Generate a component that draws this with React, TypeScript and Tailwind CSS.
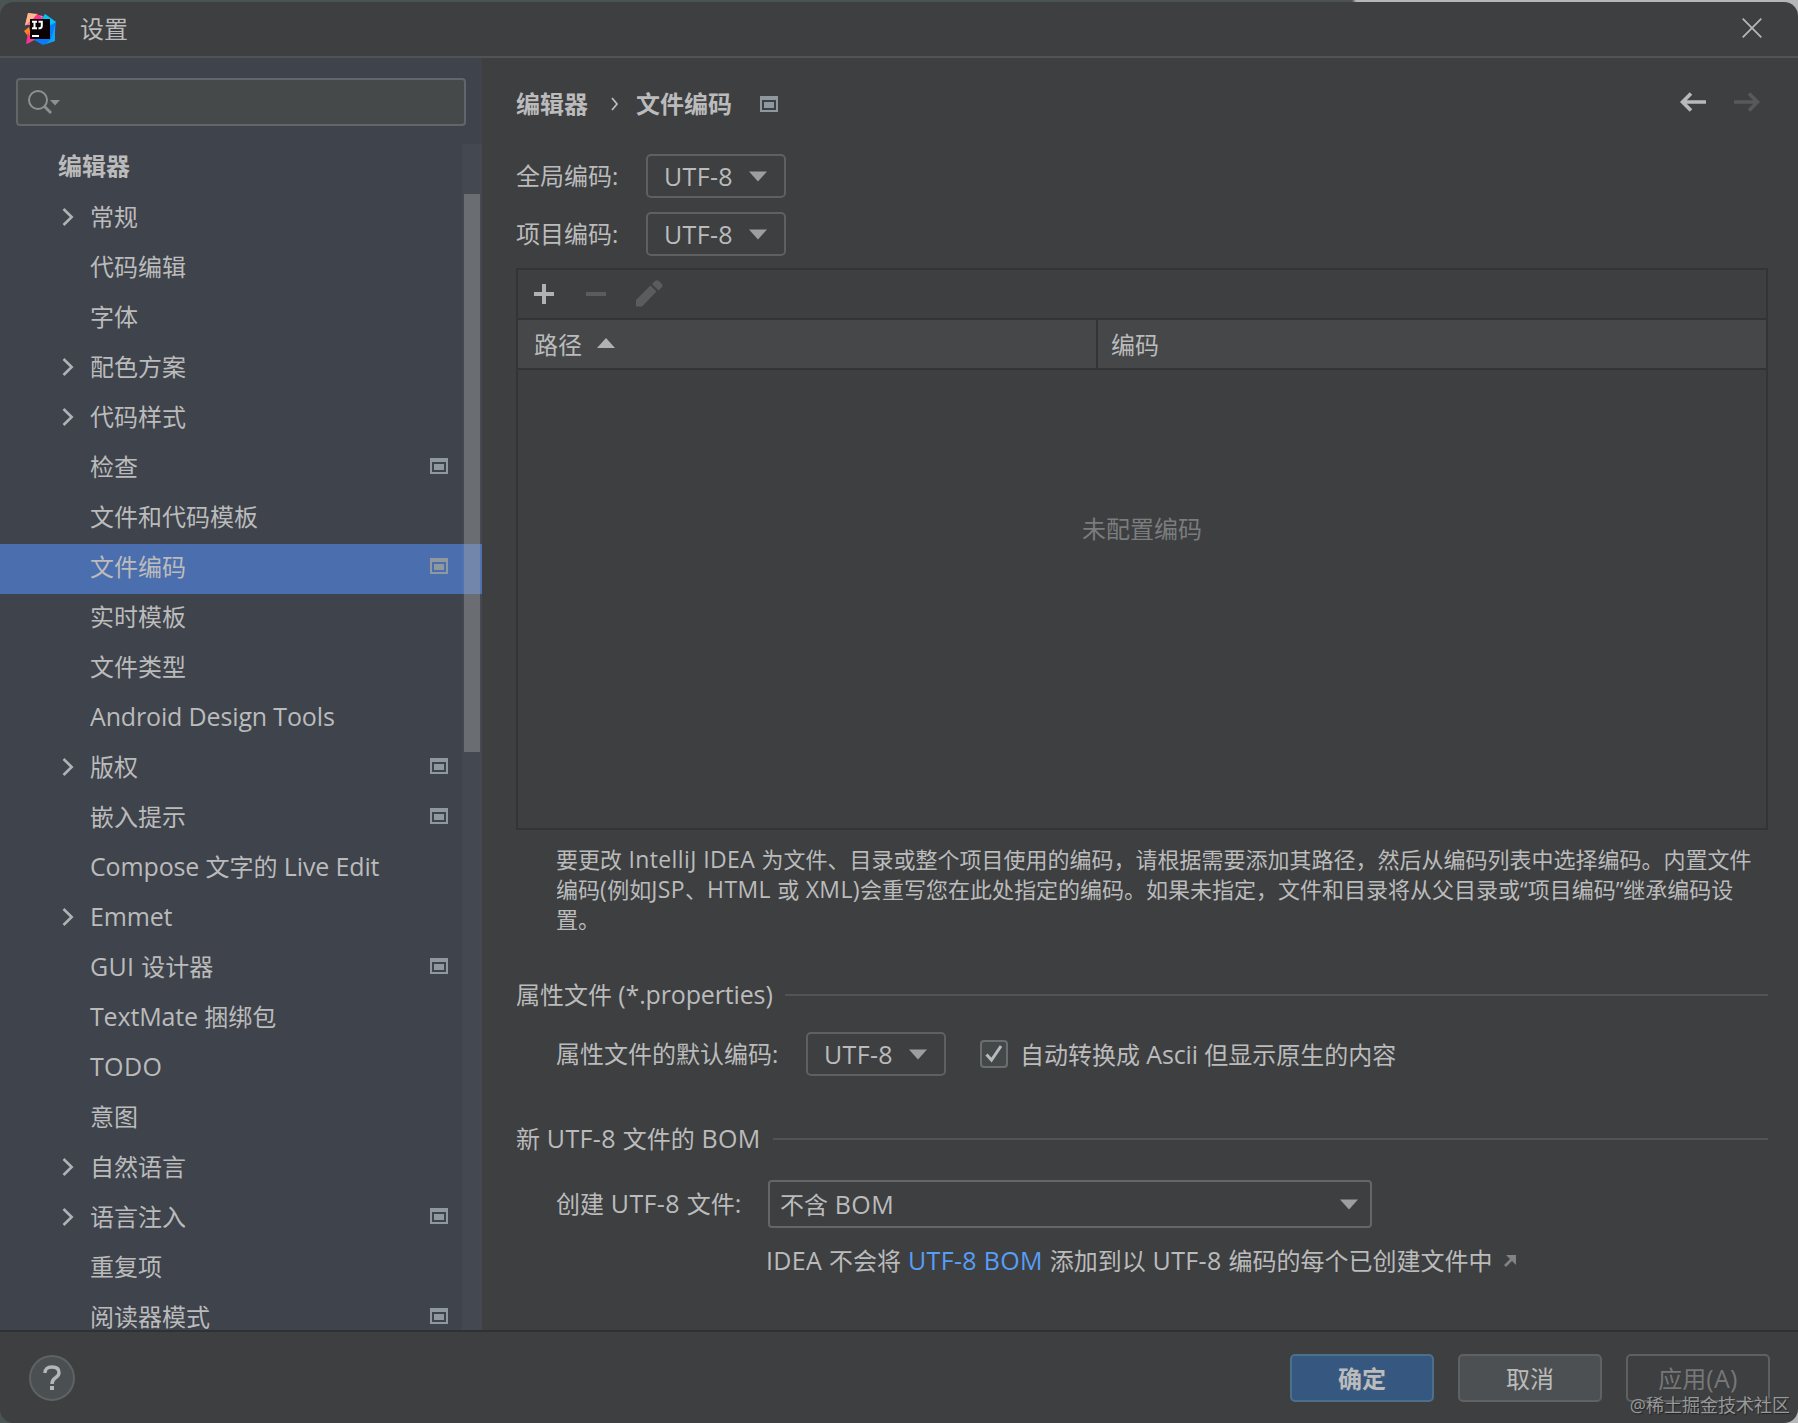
import { Fragment } from 'react';

type TreeNode = {
  label: string;
  expandable?: boolean;
  project?: boolean;
  selected?: boolean;
};

const treeNodes: TreeNode[] = [
  { label: '常规', expandable: true },
  { label: '代码编辑' },
  { label: '字体' },
  { label: '配色方案', expandable: true },
  { label: '代码样式', expandable: true },
  { label: '检查', project: true },
  { label: '文件和代码模板' },
  { label: '文件编码', project: true, selected: true },
  { label: '实时模板' },
  { label: '文件类型' },
  { label: 'Android Design Tools' },
  { label: '版权', expandable: true, project: true },
  { label: '嵌入提示', project: true },
  { label: 'Compose 文字的 Live Edit' },
  { label: 'Emmet', expandable: true },
  { label: 'GUI 设计器', project: true },
  { label: 'TextMate 捆绑包' },
  { label: 'TODO' },
  { label: '意图' },
  { label: '自然语言', expandable: true },
  { label: '语言注入', expandable: true, project: true },
  { label: '重复项' },
  { label: '阅读器模式', project: true },
];

// Latin runs are set slightly larger than the Chinese text around them,
// and upper-case runs get a little more air
const latinClass = (part: string, wide: boolean) => {
  if (wide) return 'text-[1.045em] tracking-[0.4px]';
  return /[a-z]/.test(part) ? 'text-[1.042em] tracking-[-0.15px]' : 'text-[1.042em] tracking-[0.35px]';
};

const Mixed = ({ text, wide = false }: { text: string; wide?: boolean }) => (
  <>
    {text.split(/([\x20-\x7e]+)/).map((part, i) =>
      i % 2 ? (
        <span key={i} className={latinClass(part, wide)}>
          {part}
        </span>
      ) : (
        <Fragment key={i}>{part}</Fragment>
      )
    )}
  </>
);

const AppLogo = () => (
  <svg width="32" height="32" viewBox="0 0 32 32">
    <polygon points="4,0 19,3 17,12 1,12" fill="#fc6d9c" />
    <polygon points="4,0 14,1 6,8 1,13" fill="#fdb98b" />
    <polygon points="13,1 18,5 15,10 8,8" fill="#fe2f8e" />
    <polygon points="0,18 5,14 8,25 3,22" fill="#fd8224" />
    <polygon points="4,19 7,26 12,26 2,31" fill="#fc318c" />
    <polygon points="7,25 14,25 3,31" fill="#f43b9a" />
    <polygon points="21,1 32,9 30,28 19,32 10,27 18,6" fill="#087cfa" />
    <polygon points="21,1 32,9 27,12 18,6" fill="#07c3f2" />
    <polygon points="27,26 31,12 31,28 22,31" fill="#0aa5f7" />
    <rect x="6" y="6" width="20" height="20" fill="#0b0206" />
    <path
      d="M8 8.800h5M8 15.200h5M10.500 8.500v7M14.500 8.800h3.300v4.300q0 2.100-2 2.100h-1.300"
      stroke="#fff"
      strokeWidth="2"
      fill="none"
    />
    <rect x="8" y="22" width="7" height="2" fill="#fff" />
  </svg>
);

const ProjectIcon = ({ className = '' }: { className?: string }) => (
  <svg width="18" height="16" viewBox="0 0 18 16" className={className}>
    <path d="M0 0h18v16H0zM2 4v10h14V4z" fill="#8f989e" fillRule="evenodd" />
    <rect x="4" y="6" width="10" height="6" fill="#8f989e" />
  </svg>
);

const DownArrow = () => (
  <svg width="18" height="11" viewBox="0 0 18 11">
    <polygon points="0,0.5 18,0.5 9,10.5" fill="#9c9fa0" />
  </svg>
);

const EncodingCombo = () => (
  <div className="flex h-11 w-[140px] items-center justify-between rounded-[5px] border-2 border-[#5e6062] pr-[17px] pl-4">
    <span className="pt-px">
      <Mixed text="UTF-8" />
    </span>
    <DownArrow />
  </div>
);

const SectionTitle = ({ text }: { text: string }) => (
  <div className="flex h-8 items-center gap-3">
    <h2 className="pb-0.5 whitespace-nowrap">
      <Mixed text={text} />
    </h2>
    <div className="h-0.5 flex-1 bg-[#515355]" />
  </div>
);

const TitleBar = () => (
  <header className="flex h-14 shrink-0 items-center border-b-2 border-[#515457] pr-9 pl-6">
    <AppLogo />
    <h1 className="ml-6 flex-1">设置</h1>
    <svg width="20" height="20" viewBox="0 0 20 20" className="mb-0.5">
      <path d="M0.7 0.7 19.3 19.3M19.3 0.7 0.7 19.3" stroke="#b4b5b6" strokeWidth="1.8" />
    </svg>
  </header>
);

const Sidebar = () => (
  <aside className="flex w-[482px] shrink-0 flex-col bg-[#3e434c]">
    <div className="mt-5 ml-4 flex h-12 w-[450px] shrink-0 items-center rounded-[4px] border-2 border-[#62666a] bg-[#45494a] pl-2.5">
      <svg width="32" height="24" viewBox="0 0 32 24">
        <circle cx="10" cy="10" r="9" fill="none" stroke="#8c9194" strokeWidth="2" />
        <path d="m16 16 7 7" stroke="#8c9194" strokeWidth="2.8" />
        <polygon points="22,10 32,10 27,15.5" fill="#8c9194" />
      </svg>
    </div>

    <div className="relative mt-[18px] flex-1 overflow-hidden">
      <div className="flex h-[50px] items-center pb-[7px] pl-[58px] font-bold">编辑器</div>
      {treeNodes.map((node) => (
        <div
          key={node.label}
          className={`flex h-[50px] items-center pr-[34px] ${node.selected ? 'bg-[#4b6eaf]' : ''}`}
        >
          <span className="flex w-[90px] justify-start pl-[62px]">
            {node.expandable && (
              <svg width="12" height="18" viewBox="0 0 12 18" className="relative -top-0.5">
                <path d="m1.5 1 8.2 8-8.2 8" fill="none" stroke="#aeb2b5" strokeWidth="2.6" />
              </svg>
            )}
          </span>
          <span className="flex-1 pb-[5px]">
            <Mixed text={node.label} />
          </span>
          {node.project && <ProjectIcon className="relative -top-[3px]" />}
        </div>
      ))}
      {/* Scrollbar lies over the tree */}
      <div className="absolute inset-y-0 right-0 w-5 bg-white/[0.03]">
        <div className="mt-[50px] ml-0.5 h-[558px] w-4 bg-[#a6a6a6]/40" />
      </div>
    </div>
  </aside>
);

const Breadcrumb = () => (
  <div className="flex h-8 items-center">
    <span className="font-bold">编辑器</span>
    <svg width="8" height="14" viewBox="0 0 8 14" className="mr-[17px] ml-[23px]">
      <path d="m1 1 5 6-5 6" fill="none" stroke="#bbbbbb" strokeWidth="1.8" />
    </svg>
    <span className="font-bold">文件编码</span>
    <ProjectIcon className="ml-7" />
    <div className="flex flex-1 justify-end gap-7 pr-2 pb-1">
      <svg width="26" height="20" viewBox="0 0 26 20">
        <path d="M26 10H3M11 1.500 2.500 10l8.500 8.500" fill="none" stroke="#b7b9ba" strokeWidth="3.600" />
      </svg>
      <svg width="26" height="20" viewBox="0 0 26 20">
        <path d="M0 10h23M15 1.500 23.500 10 15 18.500" fill="none" stroke="#58595b" strokeWidth="3.600" />
      </svg>
    </div>
  </div>
);

const EncodingTable = () => (
  <div className="mt-3 flex h-[562px] flex-col border-2 border-[#323436]">
    <div className="flex h-12 items-center pl-4">
      <svg width="20" height="20" viewBox="0 0 20 20">
        <path d="M10 0v20M0 10h20" stroke="#b0b2b3" strokeWidth="4" />
      </svg>
      <svg width="20" height="20" viewBox="0 0 20 20" className="ml-8">
        <path d="M0 10h20" stroke="#5a5c5e" strokeWidth="4" />
      </svg>
      <svg width="27" height="27" viewBox="0 0 27 27" className="mb-0.5 ml-[30px]">
        <path
          d="M0 20 14.500 5.500 20.500 11.500 6 26.500H0zM16 4l3-3q2-1.500 4 0l3 3q1 1.500 0 3l-3.500 3.500z"
          fill="#5a5c5e"
        />
      </svg>
    </div>
    <div className="flex h-[52px] items-stretch border-y-2 border-[#323436] bg-[#454749]">
      <div className="flex w-[580px] items-center gap-[15px] border-r-2 border-[#323436] pl-4">
        <span className="pt-0.5">路径</span>
        <svg width="18" height="10" viewBox="0 0 18 10" className="mb-0.5">
          <polygon points="0,10 18,10 9,0" fill="#b0b2b3" />
        </svg>
      </div>
      <div className="flex items-center pt-0.5 pl-[13px]">编码</div>
    </div>
    <div className="mt-[143px] text-center text-[#7a7c7e]">未配置编码</div>
  </div>
);

const Content = () => (
  <main className="flex-1 pt-[30px] pr-[30px] pl-[34px]">
    <Breadcrumb />
    <div className="mt-[34px] grid grid-cols-[130px_140px] items-center gap-y-3.5">
      <label>全局编码:</label>
      <EncodingCombo />
      <label>项目编码:</label>
      <EncodingCombo />
    </div>

    <EncodingTable />

    <div className="mt-3.5 ml-10 h-[90px] text-[22px] leading-[30px] whitespace-nowrap">
      <p className="h-[30px]">
        <Mixed wide text="要更改 IntelliJ IDEA 为文件、目录或整个项目使用的编码，请根据需要添加其路径，然后从编码列表中选择编码。内置文件" />
      </p>
      <p className="h-[30px]">
        <Mixed wide text="编码(例如JSP、HTML 或 XML)会重写您在此处指定的编码。如果未指定，文件和目录将从父目录或“项目编码”继承编码设" />
      </p>
      <p className="h-[30px]">置。</p>
    </div>

    <section className="mt-[45px]">
      <SectionTitle text="属性文件 (*.properties)" />
      <div className="mt-[21px] ml-10 flex items-center">
        <label className="w-[250px]">属性文件的默认编码:</label>
        <EncodingCombo />
        <div className="ml-[34px] flex h-7 w-7 items-center justify-center rounded-[4px] border-2 border-[#6b6d6e] bg-[#43484a]">
          <svg width="18" height="18" viewBox="0 0 18 18">
            <path d="m1.500 9.500 5 5.500 9.500-14" fill="none" stroke="#b7b9ba" strokeWidth="3" />
          </svg>
        </div>
        <label className="ml-3 pt-px">
          <Mixed text="自动转换成 Ascii 但显示原生的内容" />
        </label>
      </div>
    </section>

    <section className="mt-[47px]">
      <SectionTitle text="新 UTF-8 文件的 BOM" />
      <div className="mt-[25px] ml-10 flex items-center">
        <label className="w-[212px] pb-0.5">
          <Mixed text="创建 UTF-8 文件:" />
        </label>
        <div className="flex h-12 w-[604px] items-center justify-between rounded-[4px] border-2 border-[#646668] pr-3 pl-2.5">
          <span className="pt-px">
            <Mixed text="不含 BOM" />
          </span>
          <DownArrow />
        </div>
      </div>
      <div className="mt-3.5 ml-[250px] flex h-9 items-center whitespace-pre">
        <span>
          <Mixed text="IDEA 不会将 " />
          <a className="text-[#589df6]">
            <Mixed text="UTF-8 BOM" />
          </a>
          <Mixed text=" 添加到以 UTF-8 编码的每个已创建文件中" />
        </span>
        <svg width="12" height="12" viewBox="0 0 12 12" className="mt-0.5 ml-3">
          <path d="M2 0h10v10z" fill="#7f8385" />
          <path d="M1 11l7-7" stroke="#7f8385" strokeWidth="2.600" />
        </svg>
      </div>
    </section>
  </main>
);

const Footer = () => (
  <footer className="relative flex h-[93px] shrink-0 items-center border-t-2 border-[#2f3234] pt-px pr-7 pl-[29px]">
    <div className="flex h-[46px] w-[46px] items-center justify-center rounded-full border-2 border-[#5e6264] bg-[#4a4f51]">
      <svg width="18" height="26" viewBox="0 0 18 26">
        <path d="M2 8q0-6 7-6t7 5.500q0 3-3.500 5.200T9 19" fill="none" stroke="#b4b7b8" strokeWidth="3.400" />
        <rect x="7" y="21" width="4" height="4" fill="#b4b7b8" />
      </svg>
    </div>
    <div className="flex flex-1 justify-end gap-6">
      <button className="h-12 w-36 rounded-[5px] border-2 border-[#4c708c] bg-[#365880] pt-0.5 font-bold">确定</button>
      <button className="h-12 w-36 rounded-[5px] border-2 border-[#5e6264] bg-[#4c5052] pt-0.5">取消</button>
      <button className="h-12 w-36 rounded-[5px] border-2 border-[#5e6062] pt-px text-[#777777]">
        <Mixed text="应用(A)" />
      </button>
    </div>
    <span className="absolute right-2 bottom-1.5 text-[18px] leading-6 text-[#97999a] [text-shadow:1px_1px_1px_#222]">
      @稀土掘金技术社区
    </span>
  </footer>
);

export default function App() {
  return (
    <div className="h-[1423px] w-[1798px] overflow-hidden bg-[linear-gradient(90deg,#4a5454_0,#4a5254_1352px,#b4b6b8_1356px)] pt-0.5 font-['Open_Sans','Noto_Sans_CJK_SC',sans-serif] text-[24px] leading-8 text-[#bbbbbb]">
      <div className="flex h-[1421px] flex-col overflow-hidden rounded-[14px] bg-[#3d3f41]">
        <TitleBar />
        <div className="flex min-h-0 flex-1">
          <Sidebar />
          <Content />
        </div>
        <Footer />
      </div>
    </div>
  );
}
